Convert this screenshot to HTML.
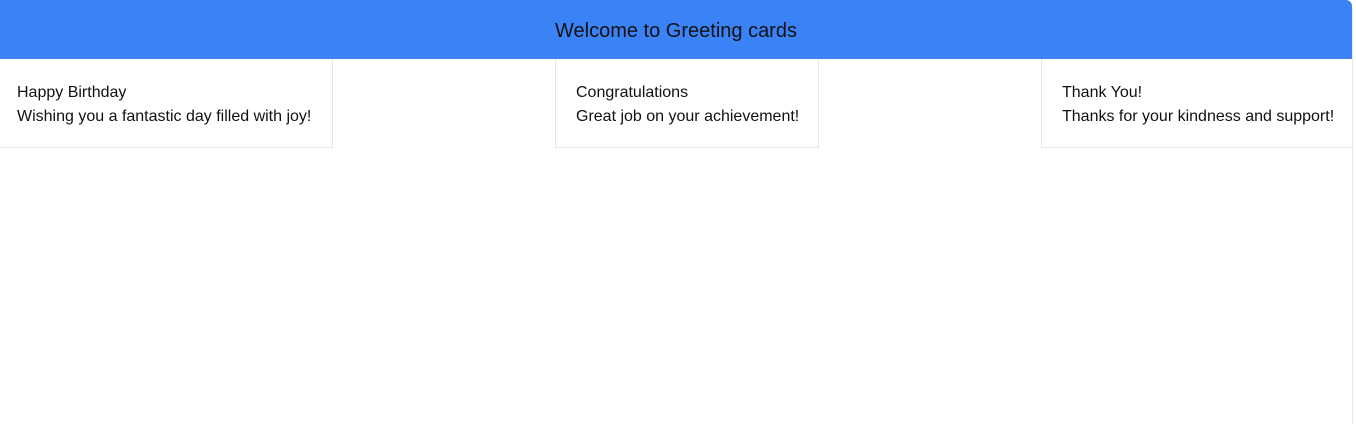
<!DOCTYPE html>
<html><head><style>
html,body{margin:0;padding:0;width:1356px;height:424px;overflow:hidden;background:#fff;font-family:"Liberation Sans",sans-serif;color:#111;}
.hdr{position:absolute;left:0;top:0;width:1352px;height:59px;background:#3b82f6;border-top-right-radius:6px;text-align:center;line-height:62px;font-size:20px;color:#111;}
.rline{position:absolute;left:1352px;top:8px;width:1px;height:416px;background:#e5e7eb;}
.card{position:absolute;top:59px;height:88px;border:1px solid #e5e7eb;border-top:none;box-sizing:content-box;background:#fff;}
.card div{position:absolute;left:20px;font-size:16px;white-space:nowrap;}
.l1{top:25px}.l2{top:49px}
</style></head><body>
<div class="hdr">Welcome to Greeting cards</div>
<div class="rline"></div>
<div class="card" style="left:-4px;width:335px"><div class="l1">Happy Birthday</div><div class="l2">Wishing you a fantastic day filled with joy!</div></div>
<div class="card" style="left:555px;width:262px"><div class="l1">Congratulations</div><div class="l2">Great job on your achievement!</div></div>
<div class="card" style="left:1041px;width:310px"><div class="l1">Thank You!</div><div class="l2">Thanks for your kindness and support!</div></div>
</body></html>
